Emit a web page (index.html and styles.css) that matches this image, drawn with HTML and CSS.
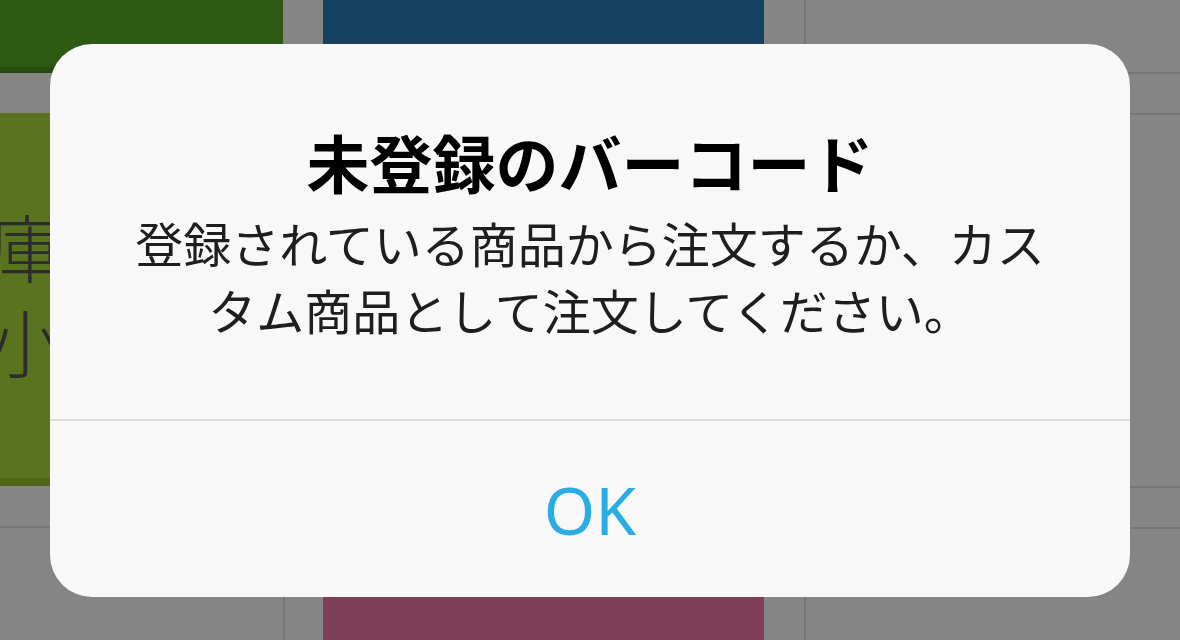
FILE: index.html
```html
<!DOCTYPE html>
<html lang="ja">
<head>
    <meta charset="UTF-8">
    <meta name="viewport" content="width=device-width, initial-scale=1.0">
    <title>商品登録</title>
    <link rel="stylesheet" href="styles.css">
</head>
<body>
    <main class="board">
        <div class="col col-left">
            <div class="tile tile-green"></div>
            <div class="gap"></div>
            <div class="tile tile-olive">
                <div class="tile-label">庫<br>小</div>
            </div>
            <div class="gap"></div>
            <div class="slot slot-left"></div>
        </div>
        <div class="col-spacer"></div>
        <div class="col col-mid">
            <div class="tile tile-blue"></div>
            <div class="gap"></div>
            <div class="tile tile-maroon"></div>
        </div>
        <div class="col-spacer"></div>
        <div class="col col-right">
            <div class="slot slot-top"></div>
            <div class="slot slot-gap"></div>
            <div class="slot slot-mid"></div>
            <div class="slot slot-gap"></div>
            <div class="slot"></div>
        </div>
    </main>

    <div class="overlay">
        <div class="alert">
            <div class="alert-body">
                <div class="alert-title">未登録のバーコード</div>
                <div class="alert-message">登録されている商品から注文するか、カス<br>タム商品として注文してください。</div>
            </div>
            <button class="alert-btn">OK</button>
        </div>
    </div>
</body>
</html>
```

FILE: styles.css
```css
body {
    margin: 0;
    width: 1180px;
    height: 640px;
    overflow: hidden;
    background-color: #858585;
    font-family: "Noto Sans CJK JP", "Noto Sans", sans-serif;
}

.board {
    display: flex;
    height: 640px;
    overflow: hidden;
}

.col {
    display: flex;
    flex-direction: column;
}

.col-left {
    width: 283px;
}

.col-spacer {
    width: 40px;
}

.col-mid {
    width: 441px;
}

.col-right {
    flex: 1;
    border-left: 2px solid #767676;
}

.gap {
    height: 40px;
    flex-shrink: 0;
}

.tile {
    flex-shrink: 0;
}

.tile-green {
    height: 67px;
    background-color: #2d5912;
    border-bottom: 6px solid #254b0e;
}

.tile-olive {
    height: 373px;
    box-sizing: border-box;
    padding-top: 84px;
    background-color: #5a731e;
    border-bottom: 8px solid #4f6619;
    overflow: hidden;
}

.tile-label {
    font-size: 74px;
    line-height: 95px;
    font-weight: 300;
    color: #2c2c2c;
    margin-left: -12px;
}

.tile-blue {
    height: 557px;
    background-color: #17425f;
}

.tile-maroon {
    height: 43px;
    background-color: #7f3f58;
}

.slot {
    flex-shrink: 0;
}

.slot-left {
    flex: 1;
    border-top: 2px solid #767676;
    border-right: 2px solid #767676;
    margin-right: -2px;
}

.slot-top {
    height: 72px;
    border-bottom: 2px solid #767676;
}

.slot-gap {
    height: 39px;
    border-bottom: 2px solid #767676;
}

.slot-mid {
    height: 371px;
    border-bottom: 2px solid #767676;
}

/* alert dialog over the board */
.overlay {
    position: fixed;
    inset: 0;
    display: flex;
    align-items: center;
    justify-content: center;
}

.alert {
    width: 1080px;
    background-color: #f8f8f8;
    border-radius: 42px;
    overflow: hidden;
    display: flex;
    flex-direction: column;
}

.alert-body {
    height: 377px;
    box-sizing: border-box;
    padding-top: 80px;
    border-bottom: 2px solid #dcdcdc;
    text-align: center;
}

.alert-title {
    font-size: 63px;
    line-height: 74px;
    font-weight: bold;
    color: #000;
}

.alert-message {
    margin-top: 11px;
    font-size: 48px;
    line-height: 67px;
    font-weight: 400;
    color: #1e1e1e;
}

.alert-btn {
    height: 176px;
    border: none;
    background: none;
    font-family: "Noto Sans", sans-serif;
    font-size: 66px;
    color: #29ade4;
    padding: 0;
    cursor: pointer;
}
```
